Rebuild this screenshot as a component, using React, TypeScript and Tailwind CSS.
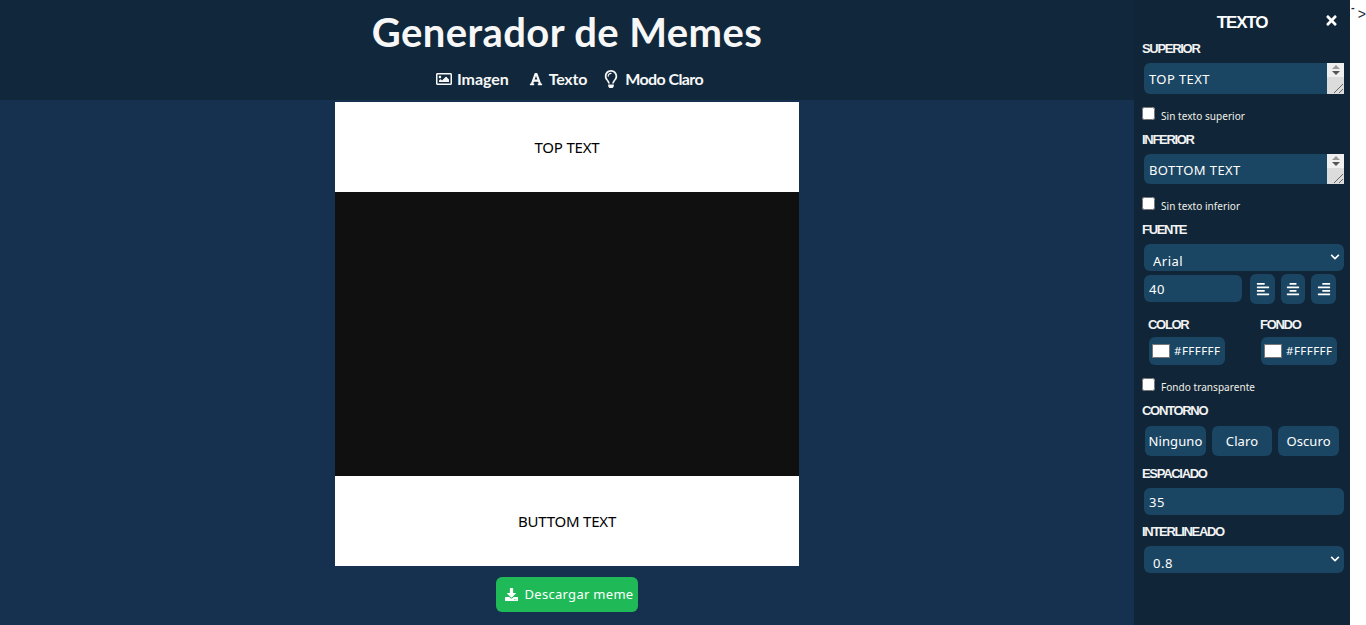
import { FaAlignCenter, FaAlignLeft, FaAlignRight, FaChevronDown, FaDownload, FaFont, FaRegImage, FaRegLightbulb, FaTimes } from 'react-icons/fa';

const bodyFont = "font-['Noto_Sans',sans-serif]";

function PanelLabel({ text, className = '' }: { text: string; className?: string }) {
  return (
    <div className={`h-[14px] font-['Liberation_Sans',sans-serif] text-[13px] leading-[16px] font-bold tracking-[-1.3px] text-[#f2f2f2] ${className}`}>
      {text}
    </div>
  );
}

function TextBox({ value, className = '' }: { value: string; className?: string }) {
  return (
    <div className={`relative ml-[10px] w-[200px] ${className}`}>
      <textarea
        defaultValue={value}
        className={`block h-full w-full resize-none overflow-hidden rounded-l-md bg-[#1b4663] pt-[7px] pr-5 pl-[5px] text-[13px] leading-[18px] tracking-[0.4px] text-white outline-none ${bodyFont}`}
      />
      {/* native-looking scroller */}
      <div className="absolute top-0 right-0 bottom-0 flex w-[17px] flex-col bg-[#dcdcdc]">
        <div className="flex h-[14px] flex-col items-center justify-center gap-[2px] bg-[#efefef]">
          <span className="h-0 w-0 border-x-[4px] border-b-[4px] border-x-transparent border-b-[#9a9a9a]" />
          <span className="h-0 w-0 border-x-[4px] border-t-[4px] border-x-transparent border-t-[#555555]" />
        </div>
        <svg className="mt-auto ml-auto" width="11" height="11" viewBox="0 0 11 11" stroke="#666666" strokeWidth="1">
          <path d="M1 10 L10 1 M6 10 L10 6" />
        </svg>
      </div>
    </div>
  );
}

function CheckRow({ label, className = '' }: { label: string; className?: string }) {
  return (
    <label className={`ml-2 flex h-[13px] items-start ${className}`}>
      <input type="checkbox" className="h-[13px] w-[13px]" />
      <span className={`mt-[2px] ml-[6px] text-[10px] leading-[14px] tracking-[0.05px] text-[#f0f0e6] ${bodyFont}`}>{label}</span>
    </label>
  );
}

function SelectBox({ value, className = '' }: { value: string; className?: string }) {
  return (
    <div className={`relative ml-[10px] h-[27px] w-[200px] ${className}`}>
      <select className={`h-full w-full appearance-none rounded-md bg-[#1b4663] pt-[7px] pl-[9px] text-[13px] leading-[18px] tracking-[0.5px] text-white outline-none ${bodyFont}`}>
        <option>{value}</option>
      </select>
      <FaChevronDown className="pointer-events-none absolute top-[8px] right-[4px] text-[10px] text-white" />
    </div>
  );
}

function ColorField() {
  return (
    <div className="flex h-[28px] w-[76px] items-center rounded-md bg-[#1b4663] pl-[3px]">
      <span className="h-[14px] w-[18px] border border-[#777777] bg-white" />
      <span className={`ml-[4px] text-[11.5px] tracking-[0.45px] text-white ${bodyFont}`}>#FFFFFF</span>
    </div>
  );
}

function AlignButton({ children, className = '' }: { children: React.ReactNode; className?: string }) {
  return (
    <button className={`flex h-[30px] items-center justify-center rounded-md bg-[#1b4663] text-[14px] text-white ${className}`}>
      {children}
    </button>
  );
}

function OutlineButton({ text, className = '' }: { text: string; className?: string }) {
  return (
    <button className={`h-[30px] rounded-md bg-[#1b4663] pt-[1px] text-[13px] tracking-[0.1px] text-white ${bodyFont} ${className}`}>
      {text}
    </button>
  );
}

function NavItem({ icon, text, className = '' }: { icon: React.ReactNode; text: string; className?: string }) {
  return (
    <span className={`flex items-center text-[16px] font-bold text-[#f7f7f7] ${className}`}>
      {icon}
      {text}
    </span>
  );
}

export default function App() {
  return (
    <div className="flex h-[625px] w-[1366px] overflow-hidden bg-white font-['Lato',sans-serif]">
      <div className="flex w-[1134px] flex-col bg-[#16304f]">
        <header className="flex h-[100px] flex-col items-center bg-[#11283c]">
          <h1 className="mt-[6px] h-[52px] text-[40px] leading-[52px] font-bold tracking-[0.4px] text-[#f7f7f7]">
            Generador de Memes
          </h1>
          <nav className="mt-[9px] ml-[5px] flex h-[24px]">
            <NavItem icon={<FaRegImage className="mr-[5px] text-[16px]" />} text="Imagen" className="tracking-[-0.05px]" />
            <NavItem icon={<FaFont className="mr-[6px] text-[14px]" />} text="Texto" className="ml-[20px] tracking-[-0.2px]" />
            <NavItem icon={<FaRegLightbulb className="mr-[5px] text-[18px]" />} text="Modo Claro" className="ml-[15px] tracking-[-0.6px]" />
          </nav>
        </header>

        <main className="mt-[2px] flex flex-col items-center">
          <div className="w-[464px]">
            <div className={`flex h-[90px] items-center justify-center bg-white text-[15px] tracking-[-0.2px] text-black ${bodyFont}`}>TOP TEXT</div>
            <div className="h-[284px] bg-[#101010]" />
            <div className={`flex h-[90px] items-center justify-center bg-white text-[15px] tracking-[-0.2px] text-black ${bodyFont}`}>BUTTOM TEXT</div>
          </div>
          <button className={`mt-[11px] flex h-[35px] w-[142px] items-center justify-center rounded-md bg-[#1fba57] pl-[5px] text-[13px] tracking-[0.3px] text-white ${bodyFont}`}>
            <FaDownload className="mr-[6px] text-[13px]" />
            Descargar meme
          </button>
        </main>
      </div>

      <aside className="flex w-[216px] flex-col bg-[#102538]">
        <div className="relative mt-[12px] h-[20px] text-center font-['Liberation_Sans',sans-serif] text-[17px] leading-[22px] font-bold tracking-[-1.2px] text-white">
          TEXTO
          <FaTimes className="absolute top-[1px] right-[11px] text-[15px]" />
        </div>

        <PanelLabel text="SUPERIOR" className="mt-[9px] ml-2" />
        <TextBox value="TOP TEXT" className="mt-2 h-[31px]" />
        <CheckRow label="Sin texto superior" className="mt-[13px]" />

        <PanelLabel text="INFERIOR" className="mt-3 ml-2" />
        <TextBox value="BOTTOM TEXT" className="mt-2 h-[30px]" />
        <CheckRow label="Sin texto inferior" className="mt-[13px]" />

        <PanelLabel text="FUENTE" className="mt-3 ml-2" />
        <SelectBox value="Arial" className="mt-2" />

        <div className="mt-[3px] ml-[10px] flex items-start">
          <div className={`mt-[1px] flex h-[27px] w-[98px] items-center rounded-md bg-[#1b4663] pt-[2px] pl-[5px] text-[13px] tracking-[0.5px] text-white ${bodyFont}`}>40</div>
          <AlignButton className="ml-2 w-[25px]"><FaAlignLeft /></AlignButton>
          <AlignButton className="ml-[6px] w-[24px]"><FaAlignCenter /></AlignButton>
          <AlignButton className="ml-[6px] w-[25px]"><FaAlignRight /></AlignButton>
        </div>

        <div className="mt-[13px] flex">
          <PanelLabel text="COLOR" className="ml-[14px] w-[112px]" />
          <PanelLabel text="FONDO" />
        </div>
        <div className="mt-[6px] ml-[15px] flex gap-9">
          <ColorField />
          <ColorField />
        </div>
        <CheckRow label="Fondo transparente" className="mt-[13px]" />

        <PanelLabel text="CONTORNO" className="mt-3 ml-2" />
        <div className="mt-[9px] ml-[11px] flex gap-[6px]">
          <OutlineButton text="Ninguno" className="w-[61px]" />
          <OutlineButton text="Claro" className="w-[60px]" />
          <OutlineButton text="Oscuro" className="w-[61px]" />
        </div>

        <PanelLabel text="ESPACIADO" className="mt-[10px] ml-2" />
        <div className={`mt-2 ml-[10px] flex h-[27px] w-[200px] items-center rounded-md bg-[#1b4663] pt-[2px] pl-[5px] text-[13px] tracking-[0.5px] text-white ${bodyFont}`}>35</div>

        <PanelLabel text="INTERLINEADO" className="mt-[9px] ml-2" />
        <SelectBox value="0.8" className="mt-2" />
      </aside>

      <div className="flex w-4 items-start pt-[1px] pl-[1px] font-['Liberation_Sans',sans-serif] leading-[14px] text-[#1a2a3a]">
        <span className="mt-[-1px] text-[11px] font-bold">-</span>
        <span className="mt-[6px] ml-[3px] text-[14px]">&gt;</span>
      </div>
    </div>
  );
}
